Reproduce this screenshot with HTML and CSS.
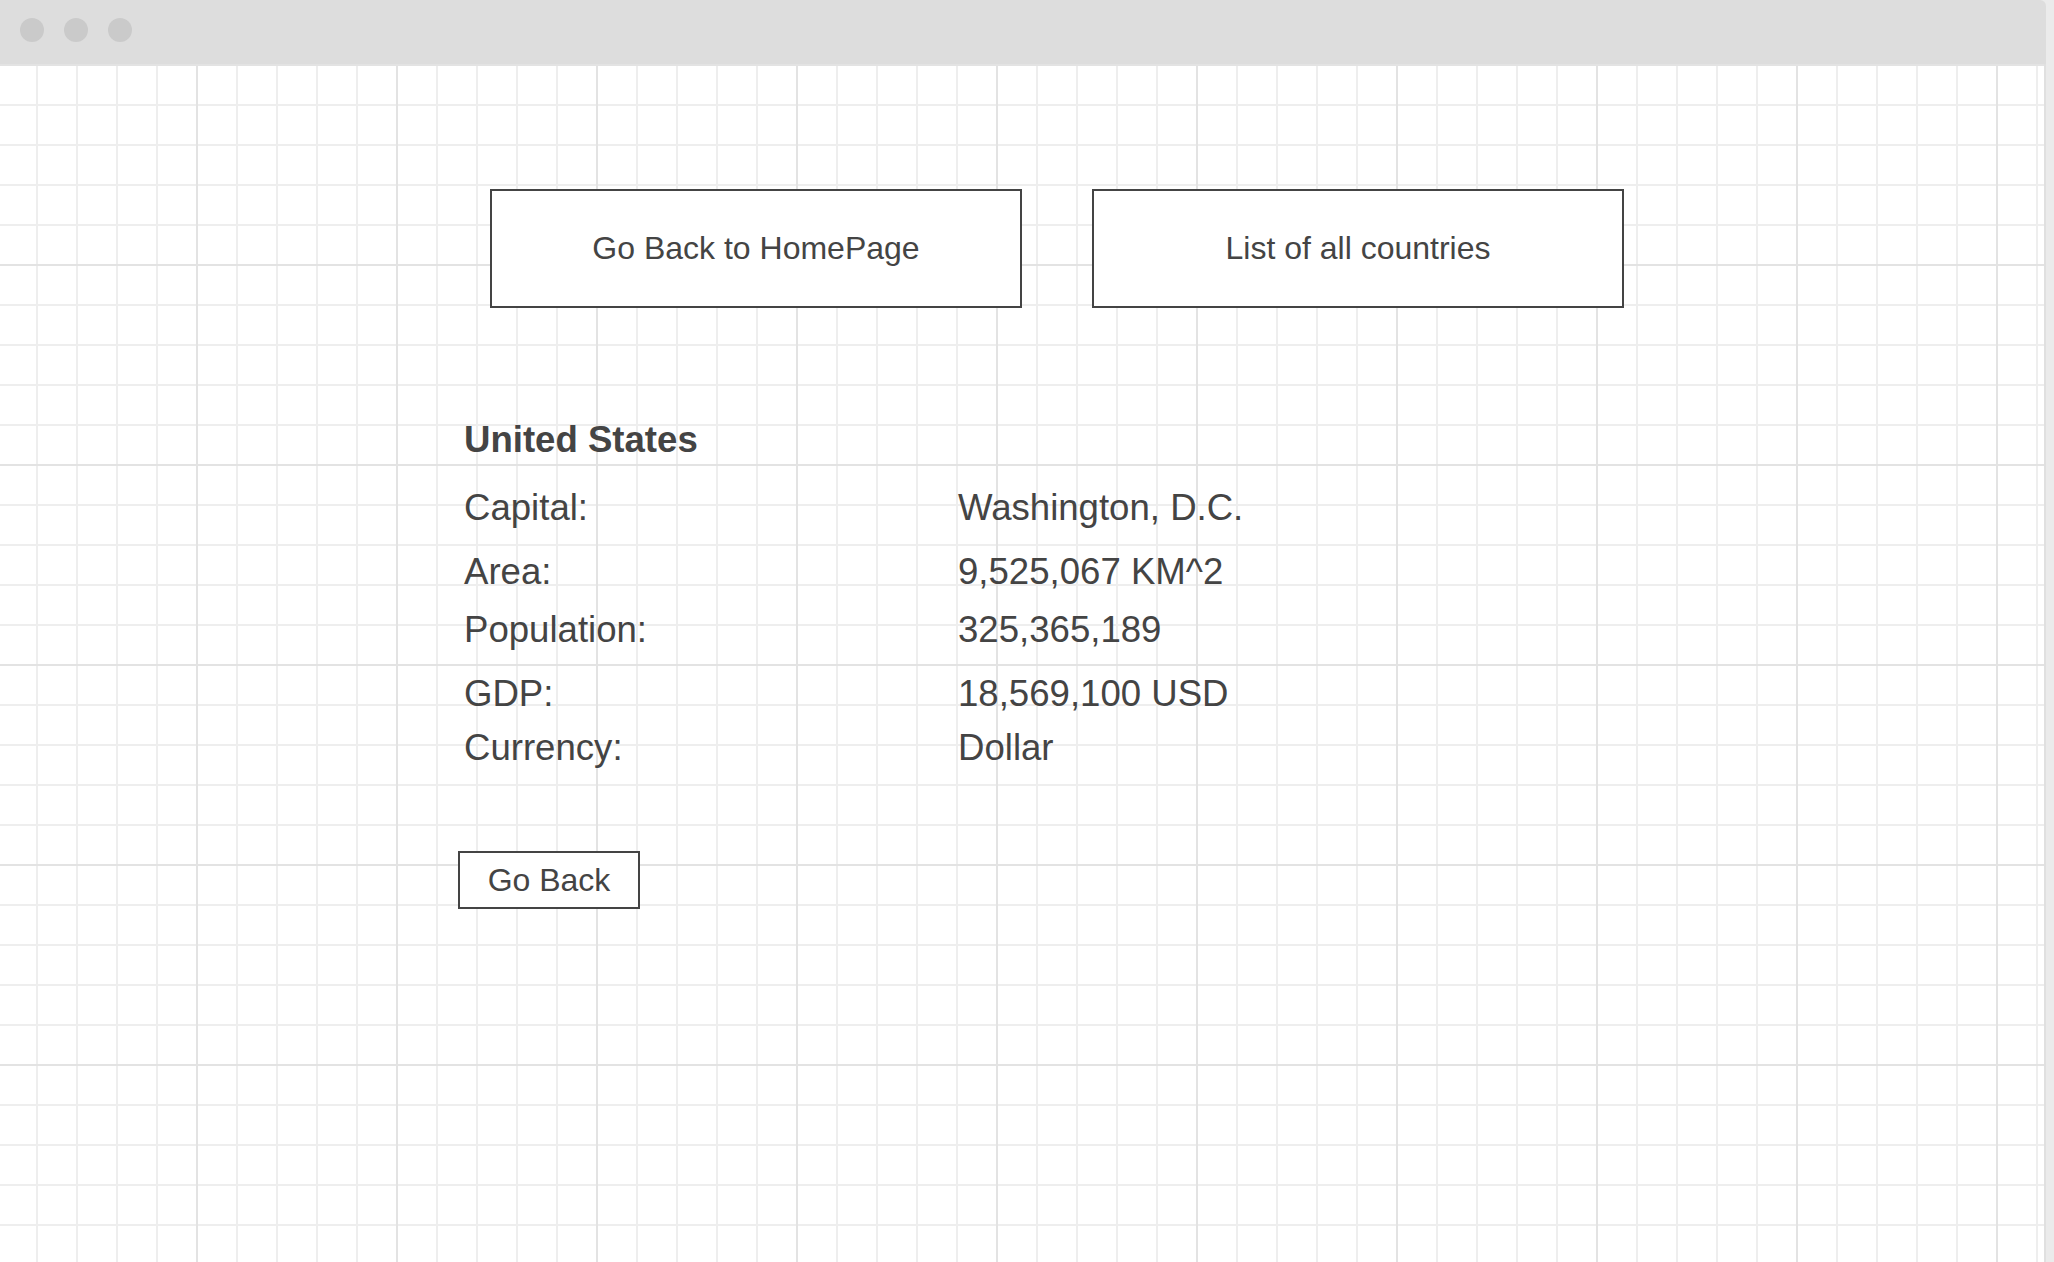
FILE: index.html
```html
<!DOCTYPE html>
<html lang="en">
<head>
<meta charset="utf-8">
<title>United States</title>
<link rel="stylesheet" href="styles.css">
</head>
<body>
<div class="window">
  <div class="titlebar">
    <span class="dot"></span>
    <span class="dot"></span>
    <span class="dot"></span>
  </div>
  <div class="content">
    <div class="nav">
      <div class="nav-btn">Go Back to HomePage</div>
      <div class="nav-btn">List of all countries</div>
    </div>
    <div class="details">
      <div class="title">United States</div>
      <div class="row row-capital"><span>Capital:</span><span>Washington, D.C.</span></div>
      <div class="row row-area"><span>Area:</span><span>9,525,067 KM^2</span></div>
      <div class="row row-pop"><span>Population:</span><span>325,365,189</span></div>
      <div class="row row-gdp"><span>GDP:</span><span>18,569,100 USD</span></div>
      <div class="row row-cur"><span>Currency:</span><span>Dollar</span></div>
    </div>
    <div class="back-btn">Go Back</div>
  </div>
</div>
</body>
</html>
```

FILE: styles.css
```css
html, body {
  margin: 0;
  padding: 0;
  height: 100%;
}
body {
  background: #ebebeb;
  font-family: "Liberation Sans", Arial, sans-serif;
  color: #444;
  overflow: hidden;
}
.window {
  width: 2046px;
  height: 100%;
  display: flex;
  flex-direction: column;
}
.titlebar {
  height: 64px;
  flex: none;
  background: #dddddd;
  border-top-right-radius: 6px;
  display: flex;
  align-items: flex-start;
  gap: 20px;
  padding: 18px 0 0 20px;
  box-sizing: border-box;
}
.dot {
  width: 24px;
  height: 24px;
  border-radius: 50%;
  background: #cacaca;
}
.content {
  flex: 1;
  background-color: #fff;
  border-right: 2px solid #e0e0e0;
  background-image:
    linear-gradient(to right, #e3e3e3 2px, transparent 2px),
    linear-gradient(to bottom, #e3e3e3 2px, transparent 2px),
    linear-gradient(to right, #eeeeee 2px, transparent 2px),
    linear-gradient(to bottom, #eeeeee 2px, transparent 2px);
  background-size: 200px 200px, 200px 200px, 40px 40px, 40px 40px;
  background-position: 196px 0, 0 0, 36px 0, 0 0;
  padding-top: 125px;
}
.nav {
  display: flex;
  gap: 70px;
  margin-left: 490px;
}
.nav-btn {
  width: 532px;
  height: 119px;
  box-sizing: border-box;
  border: 2px solid #444;
  background: #fff;
  display: flex;
  align-items: center;
  justify-content: center;
  font-size: 32px;
}
.details {
  margin: 112px 0 0 464px;
}
.title {
  font-weight: bold;
  font-size: 36.6px;
  line-height: 40px;
}
.row {
  display: grid;
  grid-template-columns: 494px auto;
  font-size: 36.6px;
  line-height: 40px;
}
.row-capital { margin-top: 28px; }
.row-area { margin-top: 24px; }
.row-pop { margin-top: 18px; }
.row-gdp { margin-top: 24px; }
.row-cur { margin-top: 14px; }
.back-btn {
  margin: 83px 0 0 458px;
  width: 182px;
  height: 58px;
  box-sizing: border-box;
  border: 2px solid #444;
  background: #fff;
  display: flex;
  align-items: center;
  justify-content: center;
  font-size: 32px;
}
```
